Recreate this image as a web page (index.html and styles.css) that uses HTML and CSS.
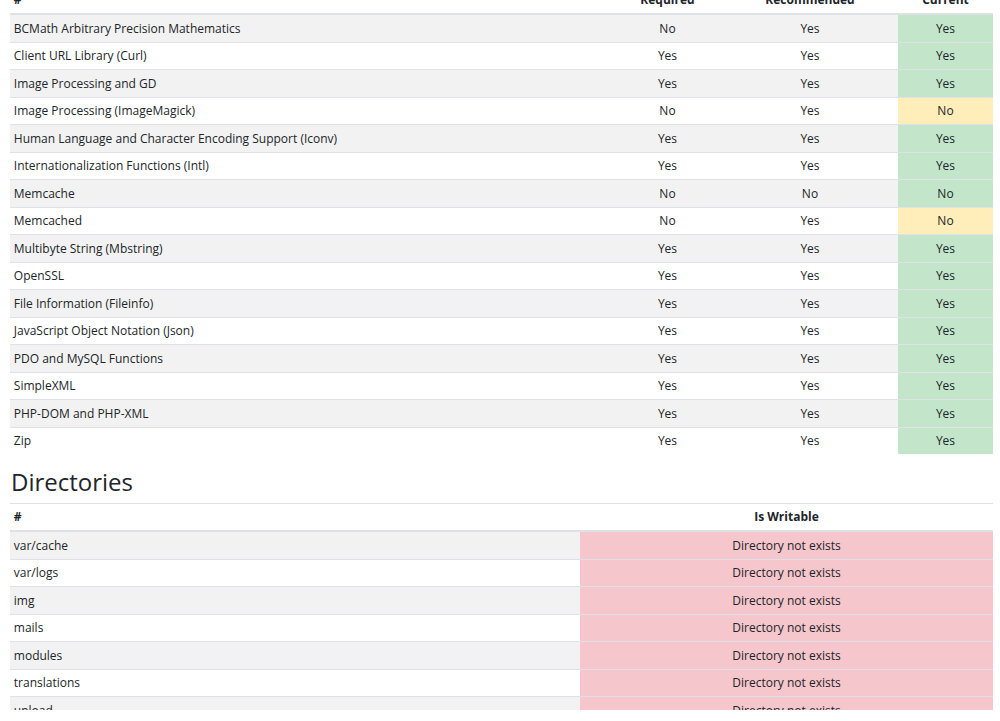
FILE: index.html
```html
<!DOCTYPE html>
<html>
<head>
<meta charset="utf-8">
<link rel="stylesheet" href="styles.css">
</head>
<body>
<div class="viewport">
  <div class="page">
    <table class="tbl tbl-ext">
      <colgroup><col><col class="c-req"><col class="c-rec"><col class="c-cur"></colgroup>
      <thead>
        <tr><th class="left">#</th><th>Required</th><th>Recommended</th><th>Current</th></tr>
      </thead>
      <tbody>
        <tr><td class="left">BCMath Arbitrary Precision Mathematics</td><td>No</td><td>Yes</td><td class="ok">Yes</td></tr>
        <tr><td class="left">Client URL Library (Curl)</td><td>Yes</td><td>Yes</td><td class="ok">Yes</td></tr>
        <tr><td class="left">Image Processing and GD</td><td>Yes</td><td>Yes</td><td class="ok">Yes</td></tr>
        <tr><td class="left">Image Processing (ImageMagick)</td><td>No</td><td>Yes</td><td class="warn">No</td></tr>
        <tr><td class="left">Human Language and Character Encoding Support (Iconv)</td><td>Yes</td><td>Yes</td><td class="ok">Yes</td></tr>
        <tr><td class="left">Internationalization Functions (Intl)</td><td>Yes</td><td>Yes</td><td class="ok">Yes</td></tr>
        <tr><td class="left">Memcache</td><td>No</td><td>No</td><td class="ok">No</td></tr>
        <tr><td class="left">Memcached</td><td>No</td><td>Yes</td><td class="warn">No</td></tr>
        <tr><td class="left">Multibyte String (Mbstring)</td><td>Yes</td><td>Yes</td><td class="ok">Yes</td></tr>
        <tr><td class="left">OpenSSL</td><td>Yes</td><td>Yes</td><td class="ok">Yes</td></tr>
        <tr><td class="left">File Information (Fileinfo)</td><td>Yes</td><td>Yes</td><td class="ok">Yes</td></tr>
        <tr><td class="left">JavaScript Object Notation (Json)</td><td>Yes</td><td>Yes</td><td class="ok">Yes</td></tr>
        <tr><td class="left">PDO and MySQL Functions</td><td>Yes</td><td>Yes</td><td class="ok">Yes</td></tr>
        <tr><td class="left">SimpleXML</td><td>Yes</td><td>Yes</td><td class="ok">Yes</td></tr>
        <tr><td class="left">PHP-DOM and PHP-XML</td><td>Yes</td><td>Yes</td><td class="ok">Yes</td></tr>
        <tr><td class="left">Zip</td><td>Yes</td><td>Yes</td><td class="ok">Yes</td></tr>
      </tbody>
    </table>

    <h2 class="section-title">Directories</h2>
    <table class="tbl tbl-dir">
      <colgroup><col><col class="c-writable"></colgroup>
      <thead>
        <tr><th class="left">#</th><th>Is Writable</th></tr>
      </thead>
      <tbody>
        <tr><td class="left">var/cache</td><td class="bad">Directory not exists</td></tr>
        <tr><td class="left">var/logs</td><td class="bad">Directory not exists</td></tr>
        <tr><td class="left">img</td><td class="bad">Directory not exists</td></tr>
        <tr><td class="left">mails</td><td class="bad">Directory not exists</td></tr>
        <tr><td class="left">modules</td><td class="bad">Directory not exists</td></tr>
        <tr><td class="left">translations</td><td class="bad">Directory not exists</td></tr>
        <tr><td class="left">upload</td><td class="bad">Directory not exists</td></tr>
        <tr><td class="left">download</td><td class="bad">Directory not exists</td></tr>
      </tbody>
    </table>
  </div>
</div>
</body>
</html>
```
FILE: styles.css
```css
html, body {
  margin: 0;
  padding: 0;
  background: #fff;
}
body {
  font-family: "Open Sans", "Noto Sans", "Liberation Sans", sans-serif;
  color: #212529;
  font-size: 12px;
}
.viewport {
  height: 710px;
  overflow: hidden;
}
.page {
  margin-top: -12.5px;
  padding-left: 10px;
  width: 983px;
}
.tbl {
  width: 100%;
  border-collapse: collapse;
  margin-bottom: 12.6px;
}
.tbl th, .tbl td {
  padding: 3.75px 3.8px;
  line-height: 19px;
  border-top: 1px solid #dee2e6;
  text-align: center;
  vertical-align: top;
  font-weight: normal;
}
.tbl th {
  font-weight: bold;
  border-bottom: 2px solid #dee2e6;
}
.tbl-ext thead th {
  padding-top: 1px;
  padding-bottom: 4.5px;
}
.tbl .left {
  text-align: left;
}
.tbl tbody tr:nth-child(odd) {
  background: #f2f2f2;
}
.tbl tbody tr:first-child td {
  border-top: 0;
}
.c-req { width: 109px; }
.c-rec { width: 176px; }
.c-cur { width: 95px; }
.c-writable { width: 413px; }
.tbl td.ok { background: #c3e6cb; }
.tbl td.warn { background: #ffeeba; }
.tbl td.bad { background: #f5c6cb; }
.section-title {
  font-weight: 400;
  font-size: 24px;
  line-height: 30px;
  margin: 0 0 6px 1px;
  color: #212529;
}
```
